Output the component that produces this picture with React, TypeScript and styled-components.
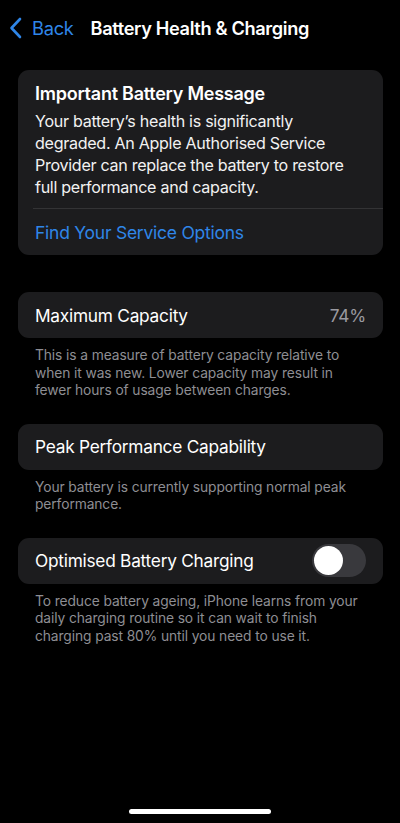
import React from "react";
import styled, { createGlobalStyle } from "styled-components";

const Global = createGlobalStyle`
  html, body { margin: 0; padding: 0; background: #000; }
  body { font-family: Inter, "Noto Sans", "Liberation Sans", sans-serif; -webkit-font-smoothing: antialiased; }
`;

const Screen = styled.div`
  width: 400px;
  height: 823px;
  background: #000;
  color: #fff;
  display: flex;
  flex-direction: column;
  overflow: hidden;
`;

const NavBar = styled.div`
  height: 56px;
  display: flex;
  align-items: center;
  padding: 0 0 0 9px;
  box-sizing: border-box;
`;

const BackButton = styled.div`
  display: flex;
  align-items: center;
  gap: 10px;
  color: #2f86e8;
  font-size: 18.3px;
  letter-spacing: -0.3px;
`;

const Title = styled.div`
  margin-left: 17px;
  font-size: 18.2px;
  font-weight: 600;
  letter-spacing: -0.35px;
`;

const Content = styled.div`
  flex: 1;
  display: flex;
  flex-direction: column;
  padding: 14px 17px 0 18px;
`;

const Card = styled.div<{ $mt?: number }>`
  background: #1c1c1e;
  border-radius: 11px;
  margin-top: ${(p) => p.$mt ?? 0}px;
  overflow: hidden;
`;

const MessageBody = styled.div`
  padding: 13px 17px 10px 17px;
`;

const MessageTitle = styled.div`
  font-size: 18px;
  font-weight: 600;
  letter-spacing: -0.25px;
  line-height: 22px;
  margin-bottom: 5px;
`;

const MessageText = styled.div`
  font-size: 16.1px;
  line-height: 22px;
  letter-spacing: -0.3px;
  color: #f2f2f2;
`;

const Separator = styled.div`
  height: 1px;
  background: #333335;
  margin-left: 15px;
`;

const LinkRow = styled.div`
  height: 46px;
  display: flex;
  align-items: center;
  padding-left: 17px;
  color: #2f86e8;
  font-size: 17.5px;
  letter-spacing: -0.25px;
`;

const Row = styled.div`
  height: 46px;
  display: flex;
  align-items: center;
  justify-content: space-between;
  padding: 0 17px;
  font-size: 17.3px;
  letter-spacing: -0.25px;
`;

const Value = styled.span`
  color: #9a9aa0;
`;

const Footer = styled.div`
  padding: 9px 17px 0 17px;
  font-size: 13.8px;
  line-height: 17.5px;
  letter-spacing: -0.1px;
  color: #8e8e93;
`;

const Toggle = styled.div`
  width: 54px;
  height: 33px;
  border-radius: 17px;
  background: #39393d;
  padding: 2px;
  box-sizing: border-box;
  display: flex;
  align-items: center;
`;

const Knob = styled.div`
  width: 29px;
  height: 29px;
  border-radius: 50%;
  background: #fff;
`;

const HomeBar = styled.div`
  height: 5px;
  width: 142px;
  border-radius: 3px;
  background: #fff;
  align-self: center;
  margin-bottom: 9px;
`;

const Chevron = () => (
  <svg width="13" height="22" viewBox="0 0 13 22" fill="none">
    <path d="M11 2 L2.5 11 L11 20" stroke="#2f86e8" strokeWidth="2.6" strokeLinecap="round" strokeLinejoin="round" />
  </svg>
);

export default function App() {
  return (
    <Screen>
      <Global />
      <NavBar>
        <BackButton>
          <Chevron />
          <span>Back</span>
        </BackButton>
        <Title>Battery Health &amp; Charging</Title>
      </NavBar>
      <Content>
        <Card>
          <MessageBody>
            <MessageTitle>Important Battery Message</MessageTitle>
            <MessageText>
              Your battery’s health is significantly degraded. An Apple Authorised Service Provider can replace the
              battery to restore full performance and capacity.
            </MessageText>
          </MessageBody>
          <Separator />
          <LinkRow>Find Your Service Options</LinkRow>
        </Card>

        <Card $mt={37}>
          <Row>
            <span>Maximum Capacity</span>
            <Value>74%</Value>
          </Row>
        </Card>
        <Footer>
          This is a measure of battery capacity relative to when it was new. Lower capacity may result in fewer hours
          of usage between charges.
        </Footer>

        <Card $mt={24}>
          <Row>
            <span>Peak Performance Capability</span>
          </Row>
        </Card>
        <Footer>Your battery is currently supporting normal peak performance.</Footer>

        <Card $mt={24}>
          <Row>
            <span>Optimised Battery Charging</span>
            <Toggle>
              <Knob />
            </Toggle>
          </Row>
        </Card>
        <Footer>
          To reduce battery ageing, iPhone learns from your daily charging routine so it can wait to finish charging
          past 80% until you need to use it.
        </Footer>
      </Content>
      <HomeBar />
    </Screen>
  );
}
